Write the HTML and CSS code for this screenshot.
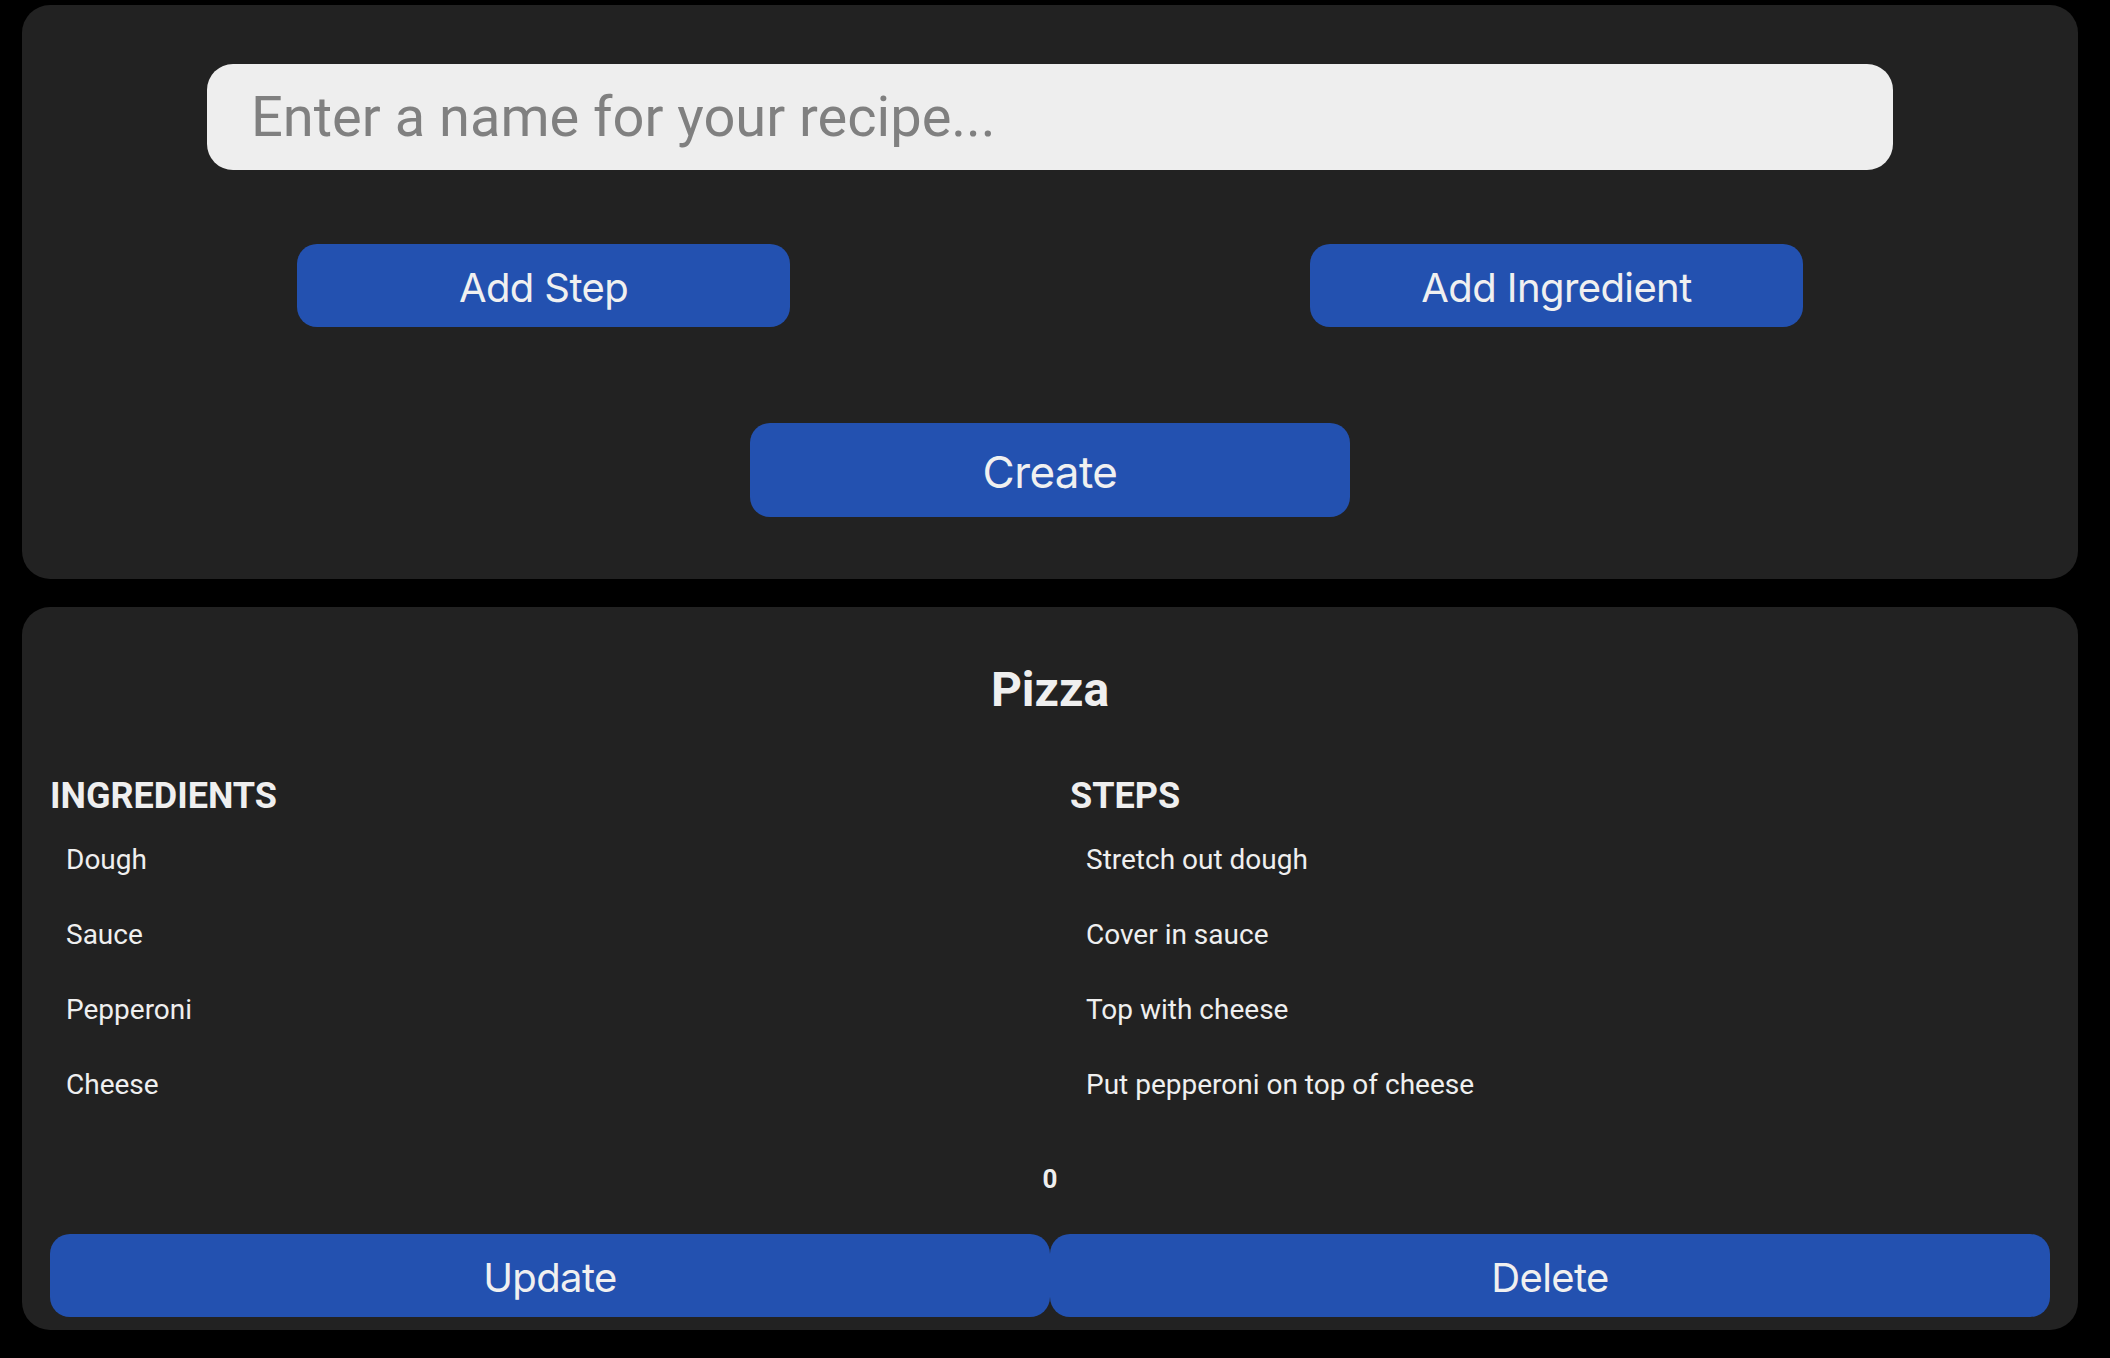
FILE: index.html
```html
<!DOCTYPE html>
<html lang="en">
<head>
    <meta charset="UTF-8">
    <meta name="viewport" content="width=device-width, initial-scale=1.0">
    <title>Recipes</title>
    <link rel="stylesheet" href="styles.css">
</head>
<body>
    <div class="page">
        <div class="card creator">
            <input class="name-input" type="text" placeholder="Enter a name for your recipe...">
            <div class="add-row">
                <button class="btn add-btn">Add Step</button>
                <button class="btn add-btn">Add Ingredient</button>
            </div>
            <button class="btn create-btn">Create</button>
        </div>

        <div class="card recipe">
            <h2 class="recipe-title">Pizza</h2>
            <div class="columns">
                <div class="column">
                    <h3>INGREDIENTS</h3>
                    <ul>
                        <li>Dough</li>
                        <li>Sauce</li>
                        <li>Pepperoni</li>
                        <li>Cheese</li>
                    </ul>
                </div>
                <div class="column steps">
                    <h3>STEPS</h3>
                    <ul>
                        <li>Stretch out dough</li>
                        <li>Cover in sauce</li>
                        <li>Top with cheese</li>
                        <li>Put pepperoni on top of cheese</li>
                    </ul>
                </div>
            </div>
            <div class="counter">0</div>
            <div class="actions">
                <button class="btn action-btn">Update</button>
                <button class="btn action-btn">Delete</button>
            </div>
        </div>
    </div>
</body>
</html>
```

FILE: styles.css
```css
body {
    font-family: Roboto, "Noto Sans", sans-serif;
    background-color: #000;
    color: #efefef;
    margin: 0;
    padding: 0;
}

.page {
    padding: 5px 32px 28px 22px;
}

.card {
    background-color: #222;
    border-radius: 28px;
}

.creator {
    display: flex;
    flex-direction: column;
    align-items: center;
    padding: 59px 28px 62px;
    margin-bottom: 28px;
}

.name-input {
    width: 1686px;
    height: 106px;
    box-sizing: border-box;
    border: none;
    border-radius: 26px;
    background-color: #eee;
    padding: 0 44px;
    font-family: Roboto, sans-serif;
    font-size: 56px;
    color: #333;
    outline: none;
}

.name-input::placeholder {
    color: #808080;
}

.btn {
    background-color: #2351b0;
    color: #f0f0f0;
    border: none;
    border-radius: 20px;
    font-family: Inter, "Liberation Sans", sans-serif;
    letter-spacing: -0.6px;
    cursor: pointer;
    padding: 3px 0 0;
}

.add-row {
    display: flex;
    justify-content: center;
    gap: 520px;
    margin-top: 74px;
}

.add-btn {
    width: 493px;
    height: 83px;
    font-size: 40px;
}

.create-btn {
    width: 600px;
    height: 94px;
    font-size: 44px;
    margin-top: 96px;
}

.recipe {
    padding: 55px 28px 13px;
}

.recipe-title {
    margin: 0;
    text-align: center;
    font-size: 48px;
    line-height: 56px;
    font-weight: 700;
}

.columns {
    display: grid;
    grid-template-columns: 1fr 1fr;
    margin-top: 57px;
}

.steps {
    padding-left: 20px;
}

h3 {
    margin: 0 0 5px;
    font-size: 36px;
    line-height: 42px;
    font-weight: 700;
}

ul {
    list-style: none;
    margin: 0;
    padding: 0 0 0 16px;
}

li {
    font-size: 28px;
    line-height: 33px;
    padding: 21px 0;
}

.counter {
    text-align: center;
    font-size: 26px;
    line-height: 30px;
    font-weight: 700;
    margin-top: 42px;
}

.actions {
    display: flex;
    margin-top: 40px;
}

.action-btn {
    flex: 1;
    height: 83px;
    font-size: 40px;
}
```
